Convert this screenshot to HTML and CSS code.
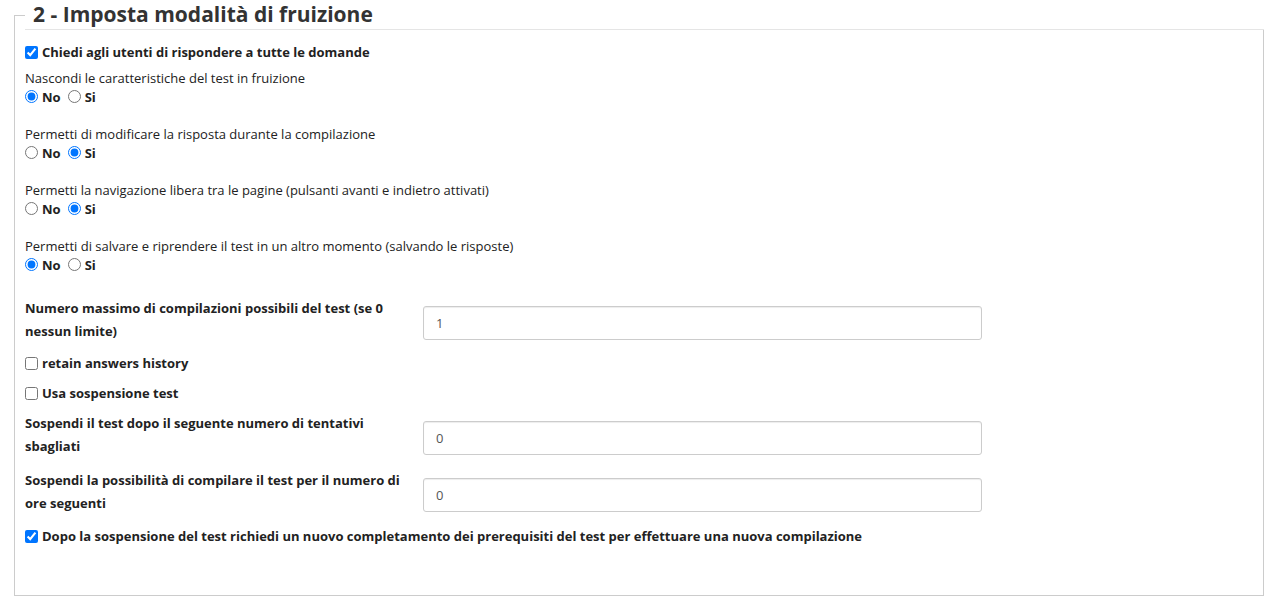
FILE: index.html
```html
<!DOCTYPE html>
<html lang="it">
<head>
<meta charset="utf-8">
<title>Imposta modalità di fruizione</title>
<link rel="stylesheet" href="styles.css">
</head>
<body>
<fieldset class="panel">
  <legend class="panel-title">2 - Imposta modalità di fruizione</legend>

  <label class="check-row first">
    <input type="checkbox" checked> <span>Chiedi agli utenti di rispondere a tutte le domande</span>
  </label>

  <div class="group first-group">
    <div class="group-label">Nascondi le caratteristiche del test in fruizione</div>
    <div class="radios">
      <label class="radio"><input type="radio" name="r1" checked><span>No</span></label>
      <label class="radio"><input type="radio" name="r1"><span>Si</span></label>
    </div>
  </div>

  <div class="group">
    <div class="group-label">Permetti di modificare la risposta durante la compilazione</div>
    <div class="radios">
      <label class="radio"><input type="radio" name="r2"><span>No</span></label>
      <label class="radio"><input type="radio" name="r2" checked><span>Si</span></label>
    </div>
  </div>

  <div class="group">
    <div class="group-label">Permetti la navigazione libera tra le pagine (pulsanti avanti e indietro attivati)</div>
    <div class="radios">
      <label class="radio"><input type="radio" name="r3"><span>No</span></label>
      <label class="radio"><input type="radio" name="r3" checked><span>Si</span></label>
    </div>
  </div>

  <div class="group">
    <div class="group-label">Permetti di salvare e riprendere il test in un altro momento (salvando le risposte)</div>
    <div class="radios">
      <label class="radio"><input type="radio" name="r4" checked><span>No</span></label>
      <label class="radio"><input type="radio" name="r4"><span>Si</span></label>
    </div>
  </div>

  <div class="field-row">
    <label class="field-label" for="f1">Numero massimo di compilazioni possibili del test (se 0 nessun limite)</label>
    <input class="field-input" id="f1" type="text" value="1">
  </div>

  <label class="check-row">
    <input type="checkbox"> <span>retain answers history</span>
  </label>
  <label class="check-row">
    <input type="checkbox"> <span>Usa sospensione test</span>
  </label>

  <div class="field-row">
    <label class="field-label" for="f2">Sospendi il test dopo il seguente numero di tentativi sbagliati</label>
    <input class="field-input" id="f2" type="text" value="0">
  </div>

  <div class="field-row second">
    <label class="field-label" for="f3">Sospendi la possibilità di compilare il test per il numero di ore seguenti</label>
    <input class="field-input" id="f3" type="text" value="0">
  </div>

  <label class="check-row last">
    <input type="checkbox" checked> <span>Dopo la sospensione del test richiedi un nuovo completamento dei prerequisiti del test per effettuare una nuova compilazione</span>
  </label>
</fieldset>
</body>
</html>
```
FILE: styles.css
```css
html, body {
  margin: 0;
  padding: 0;
  background: #fff;
}
body {
  padding: 0 8px 0 14px;
  font-family: "Open Sans", "Liberation Sans", sans-serif;
  font-size: 13px;
  color: #222;
}
.panel {
  margin: 0;
  padding: 0 10px 44px 10px;
  border: 1px solid #ccc;
  min-width: 0;
  display: flex;
  flex-direction: column;
  align-items: flex-start;
}
.panel > * {
  flex-shrink: 0;
}
.panel-title {
  box-sizing: border-box;
  width: calc(100% + 11px);
  padding: 0 0 0 8px;
  margin: 0 0 12px 0;
  font-size: 21px;
  line-height: 29px;
  font-weight: 700;
  color: #333;
  border-bottom: 1px solid #e5e5e5;
}
.check-row {
  display: flex;
  align-items: center;
  height: 30px;
  font-weight: 700;
}
.check-row.first {
  height: 20px;
}
.check-row input {
  width: 13px;
  height: 13px;
  margin: 0 4px 0 0;
  accent-color: #0075ff;
}
.group {
  display: flex;
  flex-direction: column;
  margin-bottom: 19px;
}
.first-group {
  margin-top: 7px;
}
.group-label {
  line-height: 18px;
}
.radios {
  display: flex;
  gap: 7px;
  height: 19px;
  align-items: center;
}
.radio {
  display: flex;
  align-items: center;
  font-weight: 700;
}
.radio input {
  width: 13px;
  height: 13px;
  margin: 0 4px 0 0;
  accent-color: #0075ff;
}
.field-row {
  display: grid;
  grid-template-columns: 383px 559px;
  column-gap: 15px;
  align-items: start;
  margin-top: 4px;
}
.field-row.second {
  margin-top: 11px;
}
.field-label {
  font-weight: 700;
  line-height: 23px;
}
.field-input {
  box-sizing: border-box;
  height: 34px;
  margin-top: 9px;
  padding: 6px 12px;
  border: 1px solid #ccc;
  border-radius: 3px;
  box-shadow: inset 0 1px 1px rgba(0,0,0,.075);
  font-family: "Open Sans", "Liberation Sans", sans-serif;
  font-size: 13px;
  color: #555;
  background: #fff;
}
.field-row + .check-row {
  margin-top: 5px;
}
.check-row.last {
  margin-top: 6px;
}
```
